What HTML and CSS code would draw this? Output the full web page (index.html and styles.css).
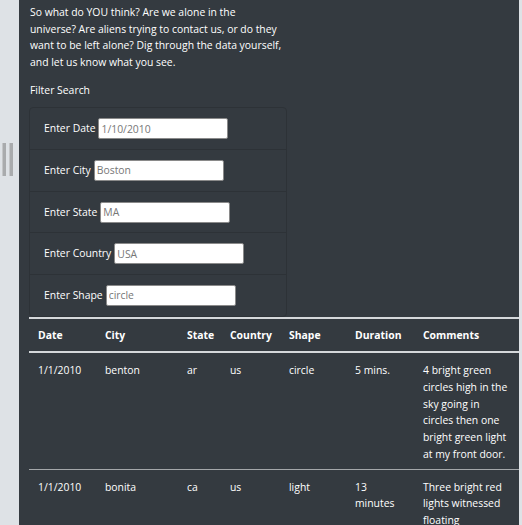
FILE: index.html
```html
<!DOCTYPE html>
<html>
<head>
<meta charset="utf-8">
<link rel="stylesheet" href="styles.css">
</head>
<body>
<div class="page">
  <div class="gutter">
    <div class="grip"><span class="bar"></span><span class="bar"></span></div>
  </div>
  <main class="panel">
    <p class="intro">So what do YOU think? Are we alone in the universe? Are aliens trying to contact us, or do they want to be left alone? Dig through the data yourself, and let us know what you see.</p>
    <div class="filter-title">Filter Search</div>
    <ul class="filters">
      <li class="filter"><label>Enter Date</label> <input type="text" placeholder="1/10/2010"></li>
      <li class="filter"><label>Enter City</label> <input type="text" placeholder="Boston"></li>
      <li class="filter"><label>Enter State</label> <input type="text" placeholder="MA"></li>
      <li class="filter"><label>Enter Country</label> <input type="text" placeholder="USA"></li>
      <li class="filter"><label>Enter Shape</label> <input type="text" placeholder="circle"></li>
    </ul>
    <table class="data">
      <colgroup>
        <col class="c-date"><col class="c-city"><col class="c-state"><col class="c-country"><col class="c-shape"><col class="c-duration"><col class="c-comments">
      </colgroup>
      <thead>
        <tr><th>Date</th><th>City</th><th>State</th><th>Country</th><th>Shape</th><th>Duration</th><th>Comments</th></tr>
      </thead>
      <tbody>
        <tr><td>1/1/2010</td><td>benton</td><td>ar</td><td>us</td><td>circle</td><td>5 mins.</td><td>4 bright green circles high in the sky going in circles then one bright green light at my front door.</td></tr>
        <tr><td>1/1/2010</td><td>bonita</td><td>ca</td><td>us</td><td>light</td><td>13 minutes</td><td>Three bright red lights witnessed floating stationary over San Diego</td></tr>
      </tbody>
    </table>
  </main>
  <div class="edge"></div>
</div>
</body>
</html>
```
FILE: styles.css
```css
html, body {
  margin: 0;
  padding: 0;
  height: 100%;
  overflow: hidden;
}
body {
  background: #dee2e6;
  font-family: "Open Sans", "Noto Sans", sans-serif;
  font-size: 10.4px;
  line-height: 16.67px;
  color: #fff;
}
.page {
  display: flex;
  height: 525px;
}
.gutter {
  width: 19px;
  flex: none;
}
.grip {
  display: flex;
  gap: 3px;
  padding: 143px 0 0 2px;
}
.bar {
  display: block;
  width: 3px;
  height: 33px;
  background: #a9abad;
  border-left: 1px solid #c4c6c8;
}
.panel {
  width: 490px;
  flex: none;
  background: #343a40;
  padding: 4px 0 0 10px;
  overflow: hidden;
}
.edge {
  flex: 1;
}
.intro {
  margin: 0 0 11px 1px;
  width: 252px;
}
.filter-title {
  margin-left: 1px;
  margin-bottom: 9px;
}
.filters {
  list-style: none;
  margin: 0;
  padding: 0;
  width: 256px;
  border: 1px solid #2d3237;
  border-radius: 4px;
}
.filter {
  height: 40.7px;
  display: flex;
  align-items: center;
  padding-left: 14px;
  border-top: 1px solid #2d3237;
}
.filter:first-child {
  border-top: none;
}
.filter label {
  margin-right: 3px;
}
.filter input {
  width: 130px;
  height: 21px;
  box-sizing: border-box;
  border: 1px solid #8a8a8a;
  border-radius: 2px;
  padding: 0 2px;
  font-family: inherit;
  font-size: 10.4px;
  background: #fff;
}
.filter input::placeholder {
  color: #777;
}
.data {
  width: 490px;
  table-layout: fixed;
  border-collapse: collapse;
}
.c-date { width: 67px; }
.c-city { width: 82px; }
.c-state { width: 43px; }
.c-country { width: 59px; }
.c-shape { width: 66px; }
.c-duration { width: 68px; }
.c-comments { width: 105px; }
.data th {
  text-align: left;
  font-weight: 700;
  padding: 8px 9px;
  border-top: 2px solid #d5d8db;
  border-bottom: 2px solid #d5d8db;
}
.data td {
  vertical-align: top;
  padding: 9px 9px 6px;
  border-bottom: 1px solid #a4a7aa;
}
```
